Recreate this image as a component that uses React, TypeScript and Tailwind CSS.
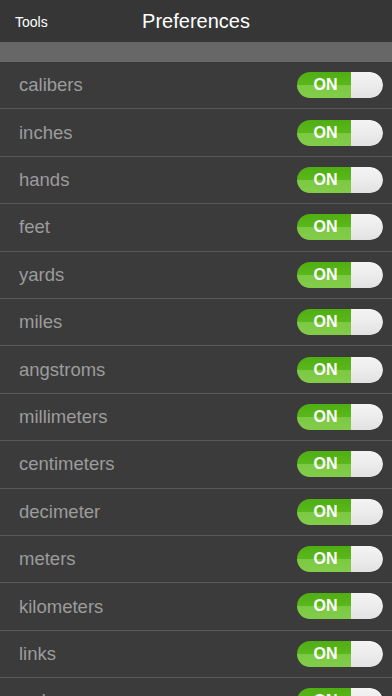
import React from "react";

const units = [
  "calibers",
  "inches",
  "hands",
  "feet",
  "yards",
  "miles",
  "angstroms",
  "millimeters",
  "centimeters",
  "decimeter",
  "meters",
  "kilometers",
  "links",
  "rods",
];

function Toggle() {
  return (
    <div className="flex h-[26px] w-[86px] overflow-hidden rounded-full">
      <div className="relative flex w-[54px] items-center justify-center bg-[linear-gradient(to_bottom,#4fae12_0%,#5ab81c_50%,#7cc943_52%,#82cc4a_100%)]">
        <span className="pl-[3px] text-[16px] font-bold text-white">ON</span>
      </div>
      <div className="flex-1 rounded-r-full bg-[linear-gradient(to_bottom,#f4f4f4_0%,#ececec_50%,#e2e2e2_100%)]" />
    </div>
  );
}

export default function App() {
  return (
    <div
      className="h-[696px] w-[392px] overflow-hidden bg-[#3b3b3b]"
      style={{ fontFamily: '"Liberation Sans", Arial, sans-serif' }}
    >
      <div className="relative flex h-[42px] items-center justify-center bg-[#363636]">
        <span className="absolute left-[15px] top-[15px] text-[14px] leading-none text-white">Tools</span>
        <span className="text-[20px] text-white">Preferences</span>
      </div>
      <div className="h-[20px] bg-[#676767]" />
      {units.map((u) => (
        <div
          key={u}
          className="flex h-[47.4px] items-center justify-between border-b border-[#585858] pl-[19px] pr-[9px]"
        >
          <span className="text-[18.5px] text-[#9c9c9c]">{u}</span>
          <Toggle />
        </div>
      ))}
    </div>
  );
}
